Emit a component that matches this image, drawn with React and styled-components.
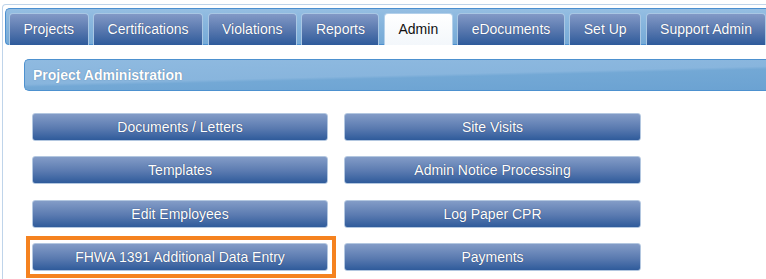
import React from 'react'
import styled, { createGlobalStyle } from 'styled-components'

const tabs = ['Projects', 'Certifications', 'Violations', 'Reports', 'Admin', 'eDocuments', 'Set Up', 'Support Admin']

const actions = [
  { label: 'Documents / Letters' },
  { label: 'Site Visits' },
  { label: 'Templates' },
  { label: 'Admin Notice Processing' },
  { label: 'Edit Employees' },
  { label: 'Log Paper CPR' },
  { label: 'FHWA 1391 Additional Data Entry', highlight: true },
  { label: 'Payments' },
]

const GlobalStyle = createGlobalStyle`
  html, body {
    margin: 0;
    background: #fff;
    overflow: hidden;
  }
  body {
    font-family: "Liberation Sans", Arial, sans-serif;
  }
`

const Frame = styled.div`
  box-sizing: border-box;
  margin: 4px -20px 0 2px;
  min-height: calc(100vh - 4px);
  border: 1px solid #bfd4ea;
  border-bottom: none;
  border-radius: 4px 0 0 0;
  padding: 3px 0 0 2px;
`

const TabBar = styled.nav`
  display: flex;
  align-items: flex-end;
  gap: 4.5px;
  padding: 4px 0 0 3px;
  border: 1px solid #4b8fcf;
  border-right: none;
  border-radius: 5px 0 0 4px;
  background: linear-gradient(#95bee2, #74a9d6);
`

const Tab = styled.div`
  box-sizing: border-box;
  height: 32px;
  margin-bottom: -1px;
  padding: 0 13.5px;
  line-height: 31px;
  font-size: 14px;
  white-space: nowrap;
  border: 1px solid ${p => (p.$active ? '#b4d0ea' : '#a9c7e4')};
  border-bottom: none;
  border-radius: 4px 4px 0 0;
  color: ${p => (p.$active ? '#111' : '#fff')};
  background: ${p => (p.$active ? 'linear-gradient(#ffffff, #f3f7fb)' : 'linear-gradient(#8299c6, #5676ad 55%, #2e5b9b)')};
  text-shadow: ${p => (p.$active ? 'none' : '0 0 1px rgba(20, 40, 80, 0.7)')};
`

const Content = styled.section`
  padding: 14px 0 0 19px;
`

const PanelHeader = styled.h2`
  box-sizing: border-box;
  margin: 0;
  height: 32px;
  padding-left: 8px;
  line-height: 30px;
  font-size: 14px;
  font-weight: bold;
  color: #fff;
  text-shadow: 0 0 1px rgba(30, 60, 100, 0.6);
  border: 1px solid #4d91cf;
  border-right: none;
  border-radius: 5px 0 0 5px;
  background: linear-gradient(178.6deg, #8fbae0 0%, #88b5dd 50%, #73a8d5 56%, #6ba2d2 100%);
`

const ButtonGrid = styled.div`
  display: grid;
  grid-template-columns: 296px 297px;
  grid-auto-rows: 28px;
  column-gap: 16px;
  row-gap: 15.33px;
  margin: 22px 0 0 8px;
`

const ActionButton = styled.button`
  position: relative;
  box-sizing: border-box;
  margin: 0;
  padding: 0;
  height: 28px;
  font-family: inherit;
  font-size: 14px;
  color: #fff;
  text-shadow: 0 0 1px rgba(15, 35, 75, 0.8);
  border: 1px solid #b3c7e0;
  border-radius: 3px;
  background: linear-gradient(#839cc7, #5a7ab0 55%, #2f5b9b);
  cursor: pointer;

  &::after {
    content: '';
    display: ${p => (p.$highlight ? 'block' : 'none')};
    position: absolute;
    inset: -8px -9px -8px -7px;
    border: 4px solid #f5821f;
    pointer-events: none;
  }
`

export default function App() {
  return (
    <>
      <GlobalStyle />
      <Frame>
        <TabBar>
          {tabs.map(t => (
            <Tab key={t} $active={t === 'Admin'}>{t}</Tab>
          ))}
        </TabBar>
        <Content>
          <PanelHeader>Project Administration</PanelHeader>
          <ButtonGrid>
            {actions.map(a => (
              <ActionButton key={a.label} $highlight={a.highlight}>{a.label}</ActionButton>
            ))}
          </ButtonGrid>
        </Content>
      </Frame>
    </>
  )
}
